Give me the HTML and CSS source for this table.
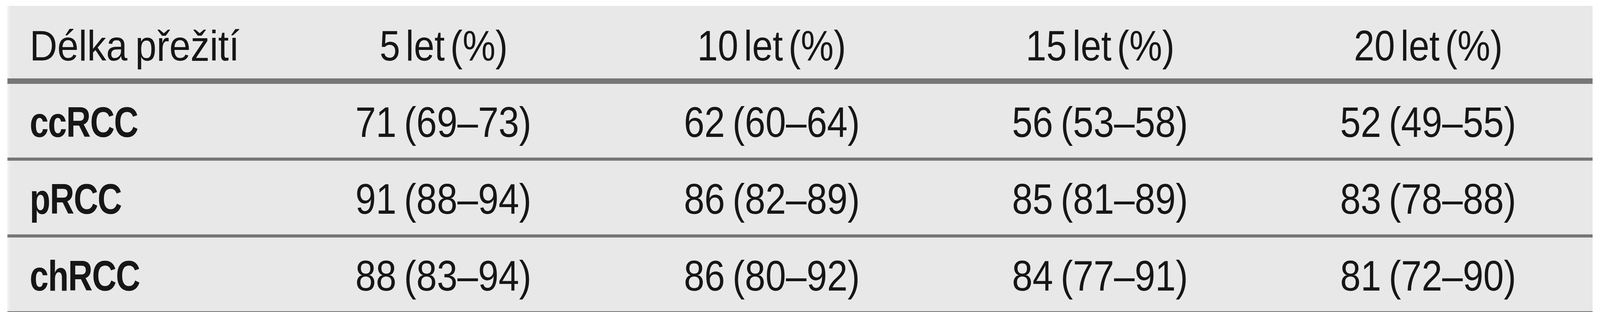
FILE: index.html
```html
<!DOCTYPE html>
<html lang="cs">
<head>
<meta charset="utf-8">
<title>Délka přežití</title>
<link rel="stylesheet" href="styles.css">
</head>
<body>
<div class="survival-table" role="table">
  <div class="row head" role="row">
    <div class="cell label" role="columnheader"><span class="t">Délka přežití</span></div>
    <div class="cell" role="columnheader"><span class="t">5 let (%)</span></div>
    <div class="cell" role="columnheader"><span class="t">10 let (%)</span></div>
    <div class="cell" role="columnheader"><span class="t">15 let (%)</span></div>
    <div class="cell" role="columnheader"><span class="t">20 let (%)</span></div>
  </div>
  <div class="row body" role="row">
    <div class="cell label strong" role="rowheader"><span class="t">ccRCC</span></div>
    <div class="cell" role="cell"><span class="t">71 (69–73)</span></div>
    <div class="cell" role="cell"><span class="t">62 (60–64)</span></div>
    <div class="cell" role="cell"><span class="t">56 (53–58)</span></div>
    <div class="cell" role="cell"><span class="t">52 (49–55)</span></div>
  </div>
  <div class="row body" role="row">
    <div class="cell label strong" role="rowheader"><span class="t">pRCC</span></div>
    <div class="cell" role="cell"><span class="t">91 (88–94)</span></div>
    <div class="cell" role="cell"><span class="t">86 (82–89)</span></div>
    <div class="cell" role="cell"><span class="t">85 (81–89)</span></div>
    <div class="cell" role="cell"><span class="t">83 (78–88)</span></div>
  </div>
  <div class="row body" role="row">
    <div class="cell label strong" role="rowheader"><span class="t">chRCC</span></div>
    <div class="cell" role="cell"><span class="t">88 (83–94)</span></div>
    <div class="cell" role="cell"><span class="t">86 (80–92)</span></div>
    <div class="cell" role="cell"><span class="t">84 (77–91)</span></div>
    <div class="cell" role="cell"><span class="t">81 (72–90)</span></div>
  </div>
</div>
</body>
</html>
```
FILE: styles.css
```css
html, body {
  margin: 0;
  padding: 0;
  background: #ffffff;
}

body {
  font-family: "Liberation Sans", Arial, sans-serif;
  color: #161616;
}

/* Proportions taken from a 4655px-wide design */
.survival-table {
  width: 99.055vw;
  margin: 15px 0 0 0.4726vw;
  background: #e8e8e8;
}

.row {
  display: grid;
  grid-template-columns: 17.155% repeat(4, 20.711%);
  font-size: 110px;
  line-height: normal;
}

.row.head {
  border-bottom: 14px solid #767676;
}

.row.body {
  border-bottom: 8px solid #767676;
}

.cell {
  text-align: center;
  white-space: nowrap;
  word-spacing: -8px;
}

.row.head .cell {
  padding-top: 38px;
  padding-bottom: 21px;
  word-spacing: -14px;
}

.row.body .cell {
  padding-top: 34px;
  padding-bottom: 28px;
}

/* condensed face: the reference type is narrower than Arial */
.t {
  display: inline-block;
  transform: scaleX(0.86);
  transform-origin: center center;
}

.row .cell.label {
  text-align: left;
  border-left: 0.15vw solid #efefef;
  padding-left: 1.246vw;
  word-spacing: -8px;
}

.cell.label .t {
  transform: scaleX(0.89);
  transform-origin: left center;
}

.cell.strong {
  font-weight: 700;
  letter-spacing: -2px;
}

.cell.strong .t {
  transform: scaleX(0.79);
}
```
